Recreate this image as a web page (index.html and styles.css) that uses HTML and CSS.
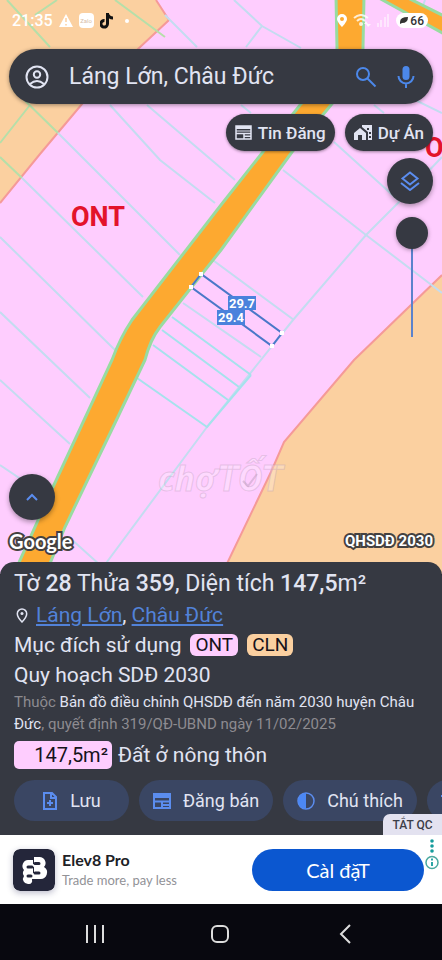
FILE: index.html
```
<!DOCTYPE html>
<html lang="vi">
<head>
    <meta charset="UTF-8">
    <meta name="viewport" content="width=device-width, initial-scale=1.0">
    <title>Bản đồ quy hoạch</title>
    <link rel="stylesheet" href="styles.css">
</head>
<body>
    <main class="map">
        <svg class="map-canvas" viewBox="0 0 442 574" preserveAspectRatio="xMidYMid slice">
            <!-- CLN land -->
            <path class="land" d="M0 0H156L169 20L138 49L82 104L40 154L0 203Z"/>
            <path class="land" d="M442 275L354 360L284 442L271 472L222 574H442Z"/>
            <path class="border" d="M156 0L169 20L138 49L82 104L40 154L0 203M442 275L354 360L284 442L271 472L222 574"/>
            <!-- parcel lines -->
            <g class="parcels">
                <path class="on-land" d="M7 0L50 47M57 0L35 15M115 0L165 37M30 105L0 143M12 88L58 133M0 157L22 178"/>
                <path d="M165 15L197 47M58 133L75 150L180 255M110 105L160 160L215 203M147 105L235 180M22 178L143 297M0 237L115 350M0 312L90 398M0 380L70 444M0 465L40 492M70 538L110 574"/>
                <path d="M234 0L262 26L301 48M262 26L246 47M241 105L251 113M425 0L418 20M374 105L384 113M405 95L442 113M334 142L398 200M283 170L366 235L442 293"/>
                <path d="M442 157L398 203L366 235L293 320L207 427L98 574M210 258L294 320M183 303L261 357"/>
                <path class="strong" d="M172 317L251 375M162 330L239 387M153 345L228 400M137 378L207 427L251 375"/>
            </g>
            <!-- roads -->
            <path class="road" d="M336 -4L337 48Q337 70 300 105L221 205L132 320Q120 338 112 360L53 487L12 578H44L65 527L115 423L145 360Q150 340 160 327L221 250L292 152L331 105Q362 70 363 48L364 -4Z"/>
            <path class="road" d="M379 -2L446 35V17L408 -2Z"/>
            <text class="zone" x="71" y="226">ONT</text>
            <text class="zone" x="425" y="157">ONT</text>
            <!-- selected parcel -->
            <path class="plot" d="M201 274L191 287L272 346L282 333Z"/>
            <path class="corner" d="M199 272h4v4h-4zM189 285h4v4h-4zM270 344h4v4h-4zM280 331h4v4h-4z"/>
            <rect class="size-bg" x="228" y="296" width="28" height="14"/>
            <rect class="size-bg" x="217" y="310" width="28" height="15"/>
            <text class="size" x="242" y="308">29.7</text>
            <text class="size" x="231" y="322">29.4</text>
            <text class="watermark" x="158" y="491">chợ<tspan class="watermark-big">TỐT</tspan></text>
            <path class="watermark-check" d="M243 481l5 5 9-12"/>
        </svg>

        <div class="status-bar">
            <span class="time">21:35</span>
            <svg width="14" height="13" viewBox="0 0 14 13"><path fill="#fff" d="M7 0l7 13H0z"/><path stroke="#fbd0a0" stroke-width="1.5" d="M7 4v4M7 10v1.5"/></svg>
            <span class="zalo">Zalo</span>
            <svg width="14" height="16" viewBox="0 0 14 16"><path fill="none" stroke="#111" stroke-width="3" d="M7.5 0v11A3.3 3.3 0 1 1 4.5 7.5M7.5 1Q9 5 13 5"/></svg>
            <span class="dot"></span>
            <span class="spacer"></span>
            <svg width="10" height="13" viewBox="0 0 10 13"><path fill="#fff" fill-rule="evenodd" d="M5 0a5 5 0 0 1 5 5c0 3-5 8-5 8S0 8 0 5a5 5 0 0 1 5-5zm0 3a2 2 0 1 0 0 4 2 2 0 0 0 0-4z"/></svg>
            <svg class="wifi" width="18" height="13" viewBox="0 0 18 13"><path fill="none" stroke="#fff" stroke-width="2" d="M1 4q7-6 14 0M4 7q4-4 8 0"/><circle cx="8" cy="10" r="2" fill="#fff"/><path fill="#fff" d="M13 7l2 3h-4zM15 13l-2-3h5z"/></svg>
            <svg class="signal" width="13" height="13" viewBox="0 0 13 13"><path fill="#fff" d="M0 9h2v4H0zM3 6h2v7H3zM7 3h2v10H7zM10 0h2v13h-2z"/></svg>
            <span class="battery"><svg width="8" height="7" viewBox="0 0 8 7"><path fill="#333" d="M0 7V5Q0 0 8 0 8 6 2 6z"/></svg>66</span>
        </div>

        <form class="search">
            <button type="button" class="icon-button" aria-label="Tài khoản">
                <svg width="24" height="24" viewBox="0 0 24 24"><g fill="none" stroke="#e1e4f2" stroke-width="2"><circle cx="12" cy="12" r="10.5"/><circle cx="12" cy="9.5" r="3.2"/><path d="M5 19q7-6 14 0"/></g></svg>
            </button>
            <input type="text" class="search-input" value="Láng Lớn, Châu Đức" aria-label="Tìm kiếm">
            <button class="icon-button" aria-label="Tìm">
                <svg width="22" height="22" viewBox="0 0 22 22"><g fill="none" stroke="#4c88ea" stroke-width="2"><circle cx="8" cy="8" r="6"/><path d="M12.5 12.5l8 8"/></g></svg>
            </button>
            <button type="button" class="icon-button" aria-label="Giọng nói">
                <svg width="18" height="24" viewBox="0 0 18 24"><rect x="5.5" y="1" width="7" height="14" rx="3.5" fill="#4c88ea"/><path fill="none" stroke="#4c88ea" stroke-width="2" d="M1.5 11a7.5 7.5 0 0 0 15 0M9 19v4"/></svg>
            </button>
        </form>

        <div class="filters">
            <button class="filter">
                <svg width="17" height="15" viewBox="0 0 17 15"><path fill="none" stroke="#e1e4f2" stroke-width="1.5" d="M1 1h15v13H1zM1 8.500h15M9 8.500V14M9 11.300h7"/><path fill="#e1e4f2" d="M1 1h15v3H1z"/><path stroke="#e1e4f2" d="M1 6h15"/></svg>
                Tin Đăng
            </button>
            <button class="filter">
                <svg width="18" height="15" viewBox="0 0 18 15"><path fill="#e1e4f2" fill-rule="evenodd" d="M0 8l6-5 6 5v7H8v-5H4v5H0zM8 0h10v15h-4V7L8 2zM13 3v2h2V3zM15 7v2h2V7zM15 11v2h2v-2z"/></svg>
                Dự Án
            </button>
        </div>

        <div class="side-tools">
            <button class="round" aria-label="Lớp bản đồ">
                <svg width="20" height="20" viewBox="0 0 20 20"><path fill="none" stroke="#5b8def" stroke-width="2" d="M10 1.5l7.5 6-7.5 6-7.5-6zM1 12l9 7 9-7"/></svg>
            </button>
            <input type="range" class="opacity" min="0" max="100" value="0" aria-label="Độ mờ">
        </div>

        <div class="map-bottom">
            <button class="round" aria-label="Mở rộng">
                <svg width="14" height="8" viewBox="0 0 14 8"><path fill="none" stroke="#5b8def" stroke-width="2" d="M2 7l5-5 5 5"/></svg>
            </button>
            <div class="map-labels">
                <span class="google">Google</span>
                <span class="plan-name">QHSDĐ 2030</span>
            </div>
        </div>
    </main>

    <section class="panel">
        <h1 class="title">Tờ <b>28</b> Thửa <b>359</b>, Diện tích <b>147,5</b>m²</h1>
        <p class="line location">
            <svg width="12" height="15" viewBox="0 0 12 15"><path fill="none" stroke="#e1e4f2" stroke-width="1.5" d="M6 1a4.7 4.7 0 0 1 4.7 4.7C10.7 9 6 14 6 14S1.3 9 1.3 5.7A4.7 4.7 0 0 1 6 1z"/><circle cx="6" cy="5.5" r="1.5" fill="#e1e4f2"/></svg>
            <span><a href="#">Láng Lớn</a>, <a href="#">Châu Đức</a></span>
        </p>
        <p class="line purpose">Mục đích sử dụng <span class="tag tag-ont">ONT</span> <span class="tag tag-cln">CLN</span></p>
        <p class="line">Quy hoạch SDĐ 2030</p>
        <p class="source">Thuộc <em>Bản đồ điều chỉnh QHSDĐ đến năm 2030 huyện Châu Đức</em>, quyết định 319/QĐ-UBND ngày 11/02/2025</p>
        <p class="land-use"><span class="area">147,5m²</span> Đất ở nông thôn</p>
        <div class="actions">
            <button class="action">
                <svg width="16" height="18" viewBox="0 0 16 18"><path fill="none" stroke="#5b8def" stroke-width="2" d="M10 1H2v16h12V5zM9 1v5h5M8 8v6M5 11h6"/></svg>
                Lưu
            </button>
            <button class="action">
                <svg width="18" height="16" viewBox="0 0 18 16"><path fill="none" stroke="#5b8def" stroke-width="2" d="M1 1h16v14H1zM1 8.500h16M9 8.500V15M9 12h8"/><path fill="#5b8def" d="M1 1h16v4H1z"/></svg>
                Đăng bán
            </button>
            <button class="action">
                <svg width="18" height="18" viewBox="0 0 18 18"><circle cx="9" cy="9" r="8" fill="none" stroke="#5b8def" stroke-width="1.5"/><path fill="#4c88f5" d="M9 1v16A8 8 0 0 1 9 1z"/></svg>
                Chú thích
            </button>
            <button class="action" aria-label="Thêm">
                <svg width="18" height="18" viewBox="0 0 18 18"><path fill="none" stroke="#5b8def" stroke-width="2" d="M0 4h18M9 4v13"/></svg>
            </button>
        </div>
        <button class="hide-ad">TẮT QC</button>
    </section>

    <aside class="ad">
        <svg class="ad-logo" width="42" height="42" viewBox="0 0 42 42">
            <rect width="42" height="42" rx="7" fill="#24263a"/>
            <path fill="#fff" d="M21 8h5.500a6 6 0 0 1 4.500 10A6.500 6.500 0 0 1 27 30h-8v1a3 3 0 0 1-3 4h-1a5 5 0 0 1-4-8 5 5 0 0 1 0-6 6 6 0 0 1 4-10h6z"/>
            <path fill="none" stroke="#24263a" stroke-width="3" stroke-linecap="round" d="M22 14.500h4M22 24h4M15 18h4M15 27h3"/>
            <path stroke="#24263a" stroke-width="1" d="M20.500 8v7M20.500 18v6"/>
        </svg>
        <div class="ad-text">
            <strong class="ad-title">Elev8 Pro</strong>
            <span class="ad-note">Trade more, pay less</span>
        </div>
        <button class="install">Càl đặT</button>
        <button class="ad-info" aria-label="Thông tin quảng cáo">
            <svg width="14" height="32" viewBox="0 0 14 32"><g fill="#159c9c"><circle cx="7" cy="3" r="1.8"/><circle cx="7" cy="8" r="1.8"/><circle cx="7" cy="13" r="1.8"/></g><circle cx="7" cy="24.5" r="6" fill="#fff" stroke="#4aa99f" stroke-width="1.5"/><path stroke="#159c9c" stroke-width="1.8" d="M7 20.5v2M7 24v4"/></svg>
        </button>
    </aside>

    <nav class="nav">
        <button class="nav-button" aria-label="Gần đây"><svg width="18" height="18" viewBox="0 0 18 18"><path stroke="#ddd" stroke-width="2" d="M1 0v18M9 0v18M17 0v18"/></svg></button>
        <button class="nav-button" aria-label="Trang chủ"><svg width="18" height="18" viewBox="0 0 18 18"><rect x="1" y="1" width="16" height="16" rx="5" fill="none" stroke="#ddd" stroke-width="2"/></svg></button>
        <button class="nav-button" aria-label="Quay lại"><svg width="12" height="20" viewBox="0 0 12 20"><path fill="none" stroke="#ddd" stroke-width="2" d="M11 1L2 10l9 9"/></svg></button>
    </nav>
</body>
</html>
```
FILE: styles.css
```
* {
    box-sizing: border-box;
}

body {
    margin: 0;
    min-height: 100vh;
    display: flex;
    flex-direction: column;
    background-color: #08080f;
    font-family: Roboto, "Noto Sans", sans-serif;
    color: #e1e4f2;
}

button,
input {
    font-family: inherit;
    margin: 0;
}

button {
    padding: 0;
    border: none;
    background: none;
    color: inherit;
    cursor: pointer;
}

svg {
    display: block;
    flex-shrink: 0;
}

/* Map */
.map {
    position: relative;
    flex: 1;
    display: flex;
    flex-direction: column;
    padding: 0 9px 20px;
    background-color: #fecdfe;
}

.map-canvas {
    position: absolute;
    top: 0;
    left: 0;
    width: 100%;
    height: 100%;
}

.status-bar,
.search,
.filters,
.side-tools,
.map-bottom {
    position: relative;
}

.land {
    fill: #fbd0a0;
}

.border {
    fill: none;
    stroke: #f59a98;
    stroke-width: 2;
}

.parcels {
    fill: none;
    stroke: #c3dcf0;
    stroke-width: 2;
}

.on-land {
    stroke: #b5dfa9;
}

.strong {
    stroke: #a5e2ec;
}

.road {
    fill: #fda930;
    stroke: #98dca0;
    stroke-width: 3;
}

.zone {
    font: 700 27px Roboto, sans-serif;
    fill: #e3132b;
}

.plot {
    fill: none;
    stroke: #4a78c8;
    stroke-width: 2;
}

.corner {
    fill: #fff;
}

.size-bg {
    fill: #4a82dc;
}

.size {
    font: 700 13px Roboto, sans-serif;
    fill: #fff;
    text-anchor: middle;
}

.watermark {
    font: italic 700 34px "Noto Sans", sans-serif;
    fill: rgba(255, 255, 255, 0.25);
    stroke: rgba(190, 160, 190, 0.4);
    stroke-width: 1;
}

.watermark-big {
    font-family: Roboto, sans-serif;
    font-size: 36px;
}

.watermark-check {
    fill: none;
    stroke: rgba(190, 160, 190, 0.5);
    stroke-width: 2;
}

/* Status bar */
.status-bar {
    display: flex;
    align-items: center;
    gap: 6px;
    height: 41px;
    padding: 0 5px 0 3px;
    color: #fff;
}

.time {
    font-size: 16px;
    font-weight: 500;
}

.zalo {
    width: 15px;
    height: 15px;
    border-radius: 4px;
    background-color: #fff;
    color: #d8c0a8;
    font-size: 6px;
    line-height: 15px;
    text-align: center;
}

.dot {
    width: 4px;
    height: 4px;
    margin-left: 5px;
    border-radius: 50%;
    background-color: #fff;
}

.spacer {
    flex: 1;
}

.signal {
    opacity: 0.5;
}

.wifi {
    opacity: 0.8;
}

.battery {
    display: flex;
    align-items: center;
    gap: 2px;
    height: 15px;
    padding: 0 4px;
    border-radius: 8px;
    background-color: #fff;
    color: #333;
    font-size: 12px;
    font-weight: 500;
}

/* Search */
.search {
    display: flex;
    align-items: center;
    height: 55px;
    margin-top: 8px;
    padding: 0 18px 0 16px;
    border-radius: 28px;
    background-color: #363942;
    box-shadow: 0 1px 4px rgba(0, 0, 0, 0.4);
}

.icon-button {
    margin-right: 20px;
}

.icon-button:last-child {
    margin-right: 0;
}

.search-input {
    flex: 1;
    min-width: 0;
    padding: 0;
    border: none;
    outline: none;
    background: none;
    color: #e1e4f2;
    font-size: 23px;
}

/* Filters */
.filters {
    display: flex;
    justify-content: flex-end;
    gap: 10px;
    margin-top: 10px;
}

.filter {
    display: flex;
    align-items: center;
    gap: 6px;
    height: 37px;
    padding: 0 9px;
    border-radius: 19px;
    background-color: #363942;
    box-shadow: 0 1px 3px rgba(0, 0, 0, 0.4);
    font-size: 17px;
    font-weight: 500;
}

.side-tools {
    display: flex;
    flex-direction: column;
    align-items: flex-end;
    gap: 13px;
    margin-top: 7px;
}

.round {
    display: flex;
    align-items: center;
    justify-content: center;
    width: 46px;
    height: 46px;
    border-radius: 50%;
    background-color: #363942;
    box-shadow: 0 2px 5px rgba(0, 0, 0, 0.35);
}

.opacity {
    appearance: none;
    writing-mode: vertical-lr;
    width: 32px;
    height: 120px;
    margin-right: 5px;
    background: linear-gradient(#5b82cc, #5b82cc) center / 2px 100% no-repeat;
}

.opacity::-webkit-slider-thumb {
    appearance: none;
    width: 32px;
    height: 32px;
    border-radius: 50%;
    background-color: #363942;
    box-shadow: 0 1px 4px rgba(0, 0, 0, 0.35);
}

.map-bottom {
    margin-top: auto;
}

.map-labels {
    display: flex;
    align-items: center;
    justify-content: space-between;
    margin-top: 9px;
    color: #fff;
    line-height: 25px;
    paint-order: stroke fill;
    -webkit-text-stroke: 4px #444140;
}

.google {
    font-family: Lato, sans-serif;
    font-size: 20px;
    font-weight: 700;
}

.plan-name {
    font-size: 15px;
    font-weight: 700;
}

/* Parcel details */
.panel {
    position: relative;
    margin-top: -12px;
    padding: 6px 0 14px 14px;
    border-radius: 14px 14px 0 0;
    background-color: #363942;
}

.title,
.line,
.source,
.land-use {
    margin: 0;
    padding-right: 14px;
}

.title {
    font-size: 23px;
    font-weight: 400;
    line-height: 32px;
}

.title b {
    font-weight: 500;
}

.line {
    font-size: 21px;
    line-height: 30px;
}

.location {
    display: flex;
    align-items: center;
    gap: 8px;
    padding-left: 2px;
}

.location a {
    color: #5282d8;
    text-decoration: underline;
}

.purpose {
    display: flex;
    align-items: center;
    gap: 9px;
}

.tag {
    padding: 0 5px;
    border-radius: 6px;
    color: #16121a;
    font-size: 19px;
    line-height: 22px;
}

.tag-ont,
.area {
    background-color: #fecdfe;
}

.tag-cln {
    background-color: #fbd0a0;
}

.source {
    margin-top: 1px;
    color: #8d8b90;
    font-size: 15px;
    line-height: 22px;
}

.source em {
    color: #e1e4f2;
    font-style: normal;
}

.land-use {
    display: flex;
    align-items: center;
    gap: 6px;
    margin-top: 6px;
    font-size: 21px;
    line-height: 28px;
}

.area {
    width: 98px;
    padding-right: 4px;
    border-radius: 5px;
    color: #16121a;
    font-size: 20px;
    text-align: right;
}

.actions {
    display: flex;
    gap: 10px;
    margin-top: 11px;
    overflow: hidden;
}

.action {
    display: flex;
    flex-shrink: 0;
    align-items: center;
    justify-content: center;
    gap: 12px;
    min-width: 115px;
    height: 41px;
    padding: 0 14px;
    border-radius: 21px;
    background-color: #3a4663;
    font-size: 18px;
}

.action:last-child {
    justify-content: flex-start;
}

.hide-ad {
    position: absolute;
    right: 0;
    bottom: 0;
    width: 59px;
    height: 21px;
    border-radius: 7px 0 0 0;
    background-color: #e3e2f0;
    color: #3c3e48;
    font-size: 12px;
    font-weight: 500;
}

/* Ad banner */
.ad {
    display: flex;
    align-items: center;
    height: 69px;
    padding-left: 13px;
    background-color: #fff;
    color: #202126;
    font-family: Lato, "Noto Sans", sans-serif;
}

.ad-logo {
    border-radius: 7px;
    box-shadow: 0 2px 6px rgba(36, 38, 90, 0.3);
}

.ad-text {
    display: flex;
    flex: 1;
    flex-direction: column;
    margin-left: 7px;
    line-height: 20px;
}

.ad-title {
    font-size: 16px;
}

.ad-note {
    color: #929297;
    font-size: 13px;
}

.install {
    width: 172px;
    height: 42px;
    border-radius: 21px;
    background-color: #0b57d0;
    color: #fff;
    font-size: 20px;
}

.ad-info {
    align-self: flex-start;
    margin: 3px 3px 0 1px;
}

/* System navigation */
.nav {
    display: grid;
    grid-template-columns: repeat(3, 1fr);
    height: 56px;
    padding: 0 34px 0 32px;
}

.nav-button {
    display: flex;
    align-items: center;
    justify-content: center;
    padding-top: 4px;
}
```
